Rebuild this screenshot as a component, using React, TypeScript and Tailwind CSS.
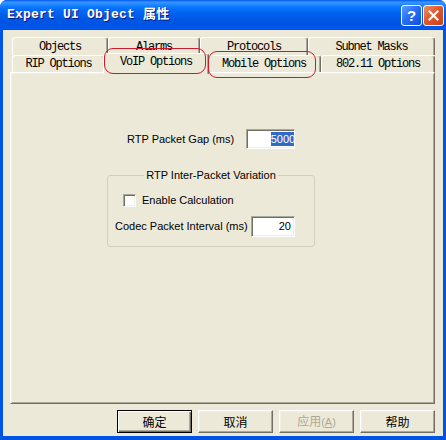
import React from 'react';

const mono = "font-['Liberation_Mono','Noto_Sans_CJK_SC',monospace]";
const sans = "font-['Liberation_Sans','Noto_Sans_CJK_SC',sans-serif]";

interface TabProps {
    label: string;
    width: string;
    selected?: boolean;
    tall?: boolean;
}

const Tab: React.FC<TabProps> = ({ label, width, selected, tall }) => {
    if (selected) {
        return (
            <div
                className={`relative z-10 -mx-[2px] -mt-[2px] h-[21px] ${width} flex justify-center pt-[1px] bg-[#ece9d8] border-l border-t border-r border-l-white border-t-white border-r-[#716f64] rounded-t-[3px] shadow-[inset_-1px_0_#aca899]`}
            >
                <span className={`${mono} text-[12px] leading-[15px] tracking-[-1.2px] text-black`}>{label}</span>
            </div>
        );
    }
    return (
        <div
            className={`${tall ? 'h-[18px] pt-[1px]' : 'h-[17px]'} ${width} flex items-center justify-center bg-[#ece9d8] border-l border-t border-r border-l-white border-t-white border-r-[#716f64] rounded-t-[3px] shadow-[inset_-1px_0_#aca899]`}
        >
            <span className={`${mono} text-[12px] leading-[15px] tracking-[-1.2px] text-black`}>{label}</span>
        </div>
    );
};

const sunken =
    'bg-white border-t border-l border-r border-b border-t-[#aca899] border-l-[#aca899] border-r-white border-b-white shadow-[inset_1px_1px_#716f64,inset_-1px_-1px_#f1efe2]';

const DialogButton: React.FC<{ children: React.ReactNode; isDefault?: boolean }> = ({ children, isDefault }) => (
    <div
        className={`w-[75px] h-[23px] flex items-center justify-center bg-[#ece9d8] ${
            isDefault
                ? 'border border-black shadow-[inset_1px_1px_white,inset_-1px_-1px_#716f64,inset_-2px_-2px_#aca899]'
                : 'border-t border-l border-r border-b border-t-white border-l-white border-r-[#716f64] border-b-[#716f64] shadow-[inset_-1px_-1px_#aca899,inset_1px_1px_#f1efe2]'
        }`}
    >
        {children}
    </div>
);

export default function App() {
    return (
        <div className="relative w-[446px] h-[440px] flex flex-col bg-[#0054e3] rounded-t-[7px] overflow-hidden">
            {/* title bar */}
            <div className="h-[30px] shrink-0 flex items-center pl-[7px] pr-[2px] bg-[linear-gradient(to_bottom,#0058ee_0%,#3a93ff_7%,#288eff_13%,#127dff_20%,#036ffc_30%,#0262ee_45%,#0057e5_65%,#0054e3_85%,#0055eb_92%,#005bf5_96%,#0046d5_100%)]">
                <span
                    className={`${mono} text-[13px] font-bold text-white tracking-[0.2px] [text-shadow:1px_1px_#0a1883] pb-[1px]`}
                >
                    Expert UI Object 属性
                </span>
                <div className="ml-auto flex items-center gap-[1px]">
                    <div className="w-[21px] h-[21px] rounded-[3px] border border-white flex items-center justify-center bg-[linear-gradient(135deg,#5c9bff_0%,#2a6ef5_45%,#0b4fe0_100%)]">
                        <span className={`${sans} text-[15px] font-bold leading-none text-white`}>?</span>
                    </div>
                    <div className="w-[21px] h-[21px] rounded-[3px] border border-white flex items-center justify-center bg-[linear-gradient(135deg,#f0906a_0%,#e0582e_45%,#c8401a_100%)]">
                        <svg width="11" height="11" viewBox="0 0 11 11">
                            <path d="M1.5 1.5 L9.5 9.5 M9.5 1.5 L1.5 9.5" stroke="white" strokeWidth="2.2" strokeLinecap="square" />
                        </svg>
                    </div>
                </div>
            </div>

            {/* client area */}
            <div className="flex-1 mx-[3px] mb-[4px] bg-[#ece9d8] flex flex-col">
                <div className="pt-[7px] pl-[7px] pr-[8px]">
                    <div className="pl-[2px] flex flex-col">
                        <div className="flex items-start h-[18px]">
                            <Tab label="Objects" width="w-[96px]" tall />
                            <Tab label="Alarms" width="w-[92px]" tall />
                            <Tab label="Protocols" width="w-[108px]" tall />
                            <Tab label="Subnet Masks" width="w-[127px]" tall />
                        </div>
                        <div className="flex items-start h-[17px]">
                            <Tab label="RIP Options" width="w-[93px]" />
                            <Tab label="VoIP Options" width="w-[106px]" selected />
                            <Tab label="Mobile Options" width="w-[114px]" />
                            <Tab label="802.11 Options" width="w-[114px]" />
                        </div>
                    </div>

                    {/* tab page */}
                    <div className="h-[332px] flex flex-col border-t border-l border-r border-b border-t-white border-l-white border-r-[#716f64] border-b-[#716f64] shadow-[inset_1px_1px_#f1efe2,inset_-1px_-1px_#aca899]">
                        <div className={`${sans} text-[11px] text-black flex items-center mt-[56px] pl-[116px] gap-[12px]`}>
                            <span>RTP Packet Gap (ms)</span>
                            <div className={`w-[49px] h-[20px] ${sunken} flex items-center justify-end pr-[1px] overflow-hidden`}>
                                <span className="bg-[#316ac5] text-white leading-[14px] -mr-[2px]">5000</span>
                            </div>
                        </div>

                        <fieldset className="ml-[96px] mt-[20px] w-[208px] border border-[#d0d0bf] rounded-[3px] pb-[9px]">
                            <legend className={`${sans} text-[11px] leading-[13px] text-black mx-auto px-[2px]`}>
                                RTP Inter-Packet Variation
                            </legend>
                            <div className={`${sans} text-[11px] text-black flex items-center mt-[10px] pl-[15px] gap-[6px]`}>
                                <div className={`w-[13px] h-[13px] ${sunken}`} />
                                <span>Enable Calculation</span>
                            </div>
                            <div className={`${sans} text-[11px] text-black flex items-center justify-between mt-[7px] pl-[7px] pr-[19px]`}>
                                <span>Codec Packet Interval (ms)</span>
                                <div className={`w-[44px] h-[21px] ${sunken} flex items-center justify-end pr-[3px]`}>
                                    <span>20</span>
                                </div>
                            </div>
                        </fieldset>
                    </div>
                </div>

                {/* buttons */}
                <div className="mt-[6px] pr-[8px] flex justify-end gap-[6px] font-['Noto_Sans_CJK_SC',sans-serif] text-[12px] text-black">
                    <DialogButton isDefault>确定</DialogButton>
                    <DialogButton>取消</DialogButton>
                    <DialogButton>
                        <span className="text-[#aca899]">
                            应用<span className={`${sans} text-[11px]`}>(<span className="underline">A</span>)</span>
                        </span>
                    </DialogButton>
                    <DialogButton>帮助</DialogButton>
                </div>
            </div>

            {/* red annotation marks */}
            <div className="absolute z-20 left-[104px] top-[48px] w-[102px] h-[26px] border border-[#d0182b] rounded-[9px] pointer-events-none" />
            <div className="absolute z-20 left-[208px] top-[51px] w-[108px] h-[27px] border border-[#d0182b] rounded-[9px] pointer-events-none" />
        </div>
    );
}
